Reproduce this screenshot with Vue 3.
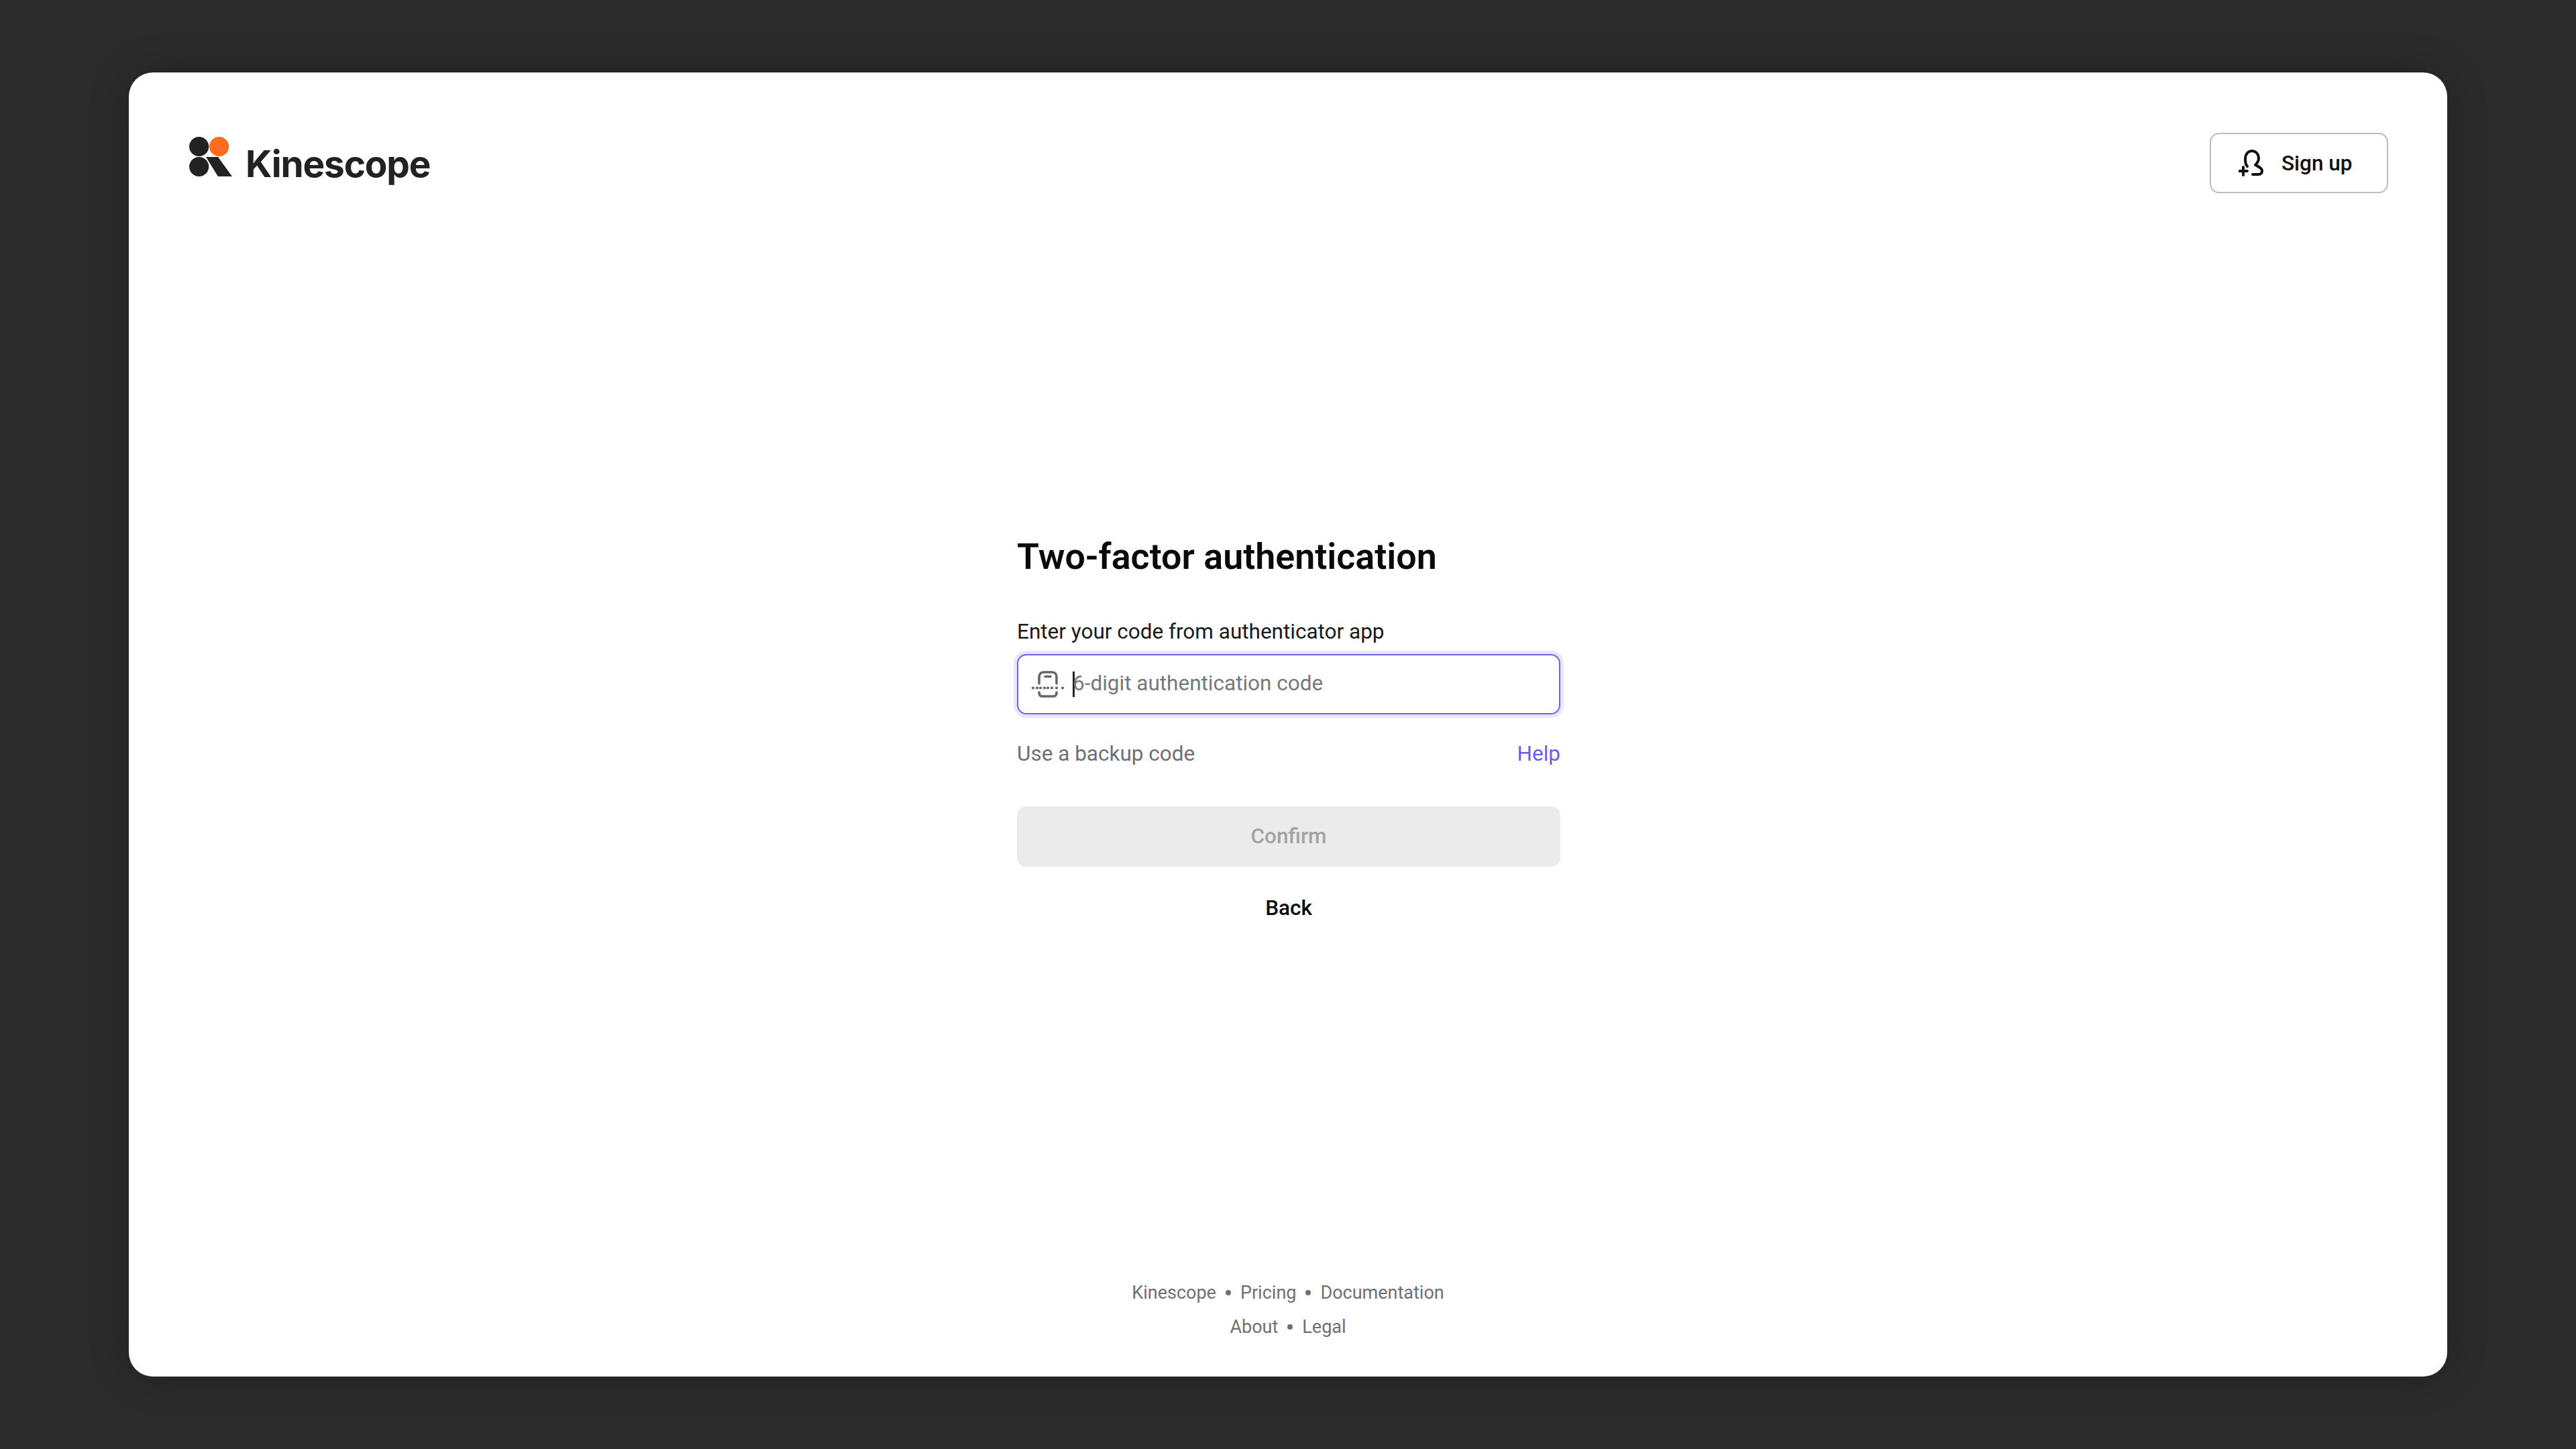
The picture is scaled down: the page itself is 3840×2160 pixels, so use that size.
<template>
  <div class="page">
    <div class="card">
      <header class="top">
        <a class="logo">
          <svg class="logo-mark" viewBox="0 0 64 59">
            <circle cx="14.7" cy="14.5" r="14.6" fill="#222" />
            <circle cx="44.6" cy="14.5" r="14.6" fill="#ff6b1f" />
            <circle cx="14.7" cy="44.5" r="14.6" fill="#222" />
            <polygon points="25,30 43,30 64,59 43,59" fill="#222" />
          </svg>
          <span class="logo-text">Kinescope</span>
        </a>
        <button class="signup">
          <svg class="signup-icon" viewBox="0 0 37 40" fill="none" stroke="#111" stroke-width="4" stroke-linecap="round" stroke-linejoin="round">
            <path d="M13 25C11 23 10 19 10 14C10 6 15 2 20 2C26 2 30 7 30 13C30 18 27 21 25 23C29 25 35 27 35 32C35 36 32 37 29 37H21" />
            <path d="M1.5 32H13M7 26V38" />
          </svg>
          Sign up
        </button>
      </header>

      <main class="main">
        <form class="form" @submit.prevent>
          <h1 class="title">Two-factor authentication</h1>
          <label class="label">Enter your code from authenticator app</label>
          <div class="field">
            <svg class="field-icon" viewBox="0 0 50 40" fill="none" stroke="#666" stroke-width="3.6" stroke-linecap="round">
              <path d="M12 19V9C12 4.500 15 2 19 2H31C35 2 38 4.500 38 9V19" />
              <path d="M12 32V33C12 36 14 38 17 38H33C36 38 38 36 38 33V32" />
              <path d="M21 8.500H29" />
              <g fill="#666" stroke="none">
                <circle v-for="x in dots" :key="x" :cx="x" cy="25.500" r="2.100" />
              </g>
            </svg>
            <span class="caret"></span>
            <span class="placeholder">6-digit authentication code</span>
          </div>
          <div class="links">
            <a class="link-muted">Use a backup code</a>
            <a class="link-help">Help</a>
          </div>
          <button class="confirm" disabled>Confirm</button>
          <a class="back">Back</a>
        </form>
      </main>

      <footer class="footer">
        <div v-for="(row, i) in footerLinks" :key="i" class="footer-row">
          <template v-for="(item, j) in row" :key="item">
            <span v-if="j > 0" class="dot"></span>
            <a>{{ item }}</a>
          </template>
        </div>
      </footer>
    </div>
  </div>
</template>

<script setup>
const dots = [3, 9, 14, 20, 25, 31, 38, 47]

const footerLinks = [
  ['Kinescope', 'Pricing', 'Documentation'],
  ['About', 'Legal'],
]
</script>

<style>
html,
body {
  margin: 0;
  background: #2b2b2b;
}
</style>

<style scoped>
.page {
  width: 3840px;
  height: 2160px;
  display: flex;
  align-items: center;
  justify-content: center;
  background: #2b2b2b;
  font-family: Roboto, "Liberation Sans", sans-serif;
}

.card {
  width: 3456px;
  height: 1944px;
  box-sizing: border-box;
  display: flex;
  flex-direction: column;
  background: #fff;
  border-radius: 36px;
  box-shadow: 0 0 60px rgba(0, 0, 0, 0.22);
}

.top {
  display: flex;
  align-items: center;
  justify-content: space-between;
  padding: 90px 88px 0 90px;
}

.logo {
  display: flex;
  align-items: flex-start;
  gap: 20px;
}

.logo-mark {
  width: 64px;
  height: 59px;
  margin-top: -3px;
}

.logo-text {
  font-family: Inter, sans-serif;
  font-weight: 700;
  font-size: 55px;
  line-height: 70px;
  letter-spacing: -1.200px;
  margin-top: 2px;
  color: #222;
}

.signup {
  width: 266px;
  height: 90px;
  box-sizing: border-box;
  display: flex;
  align-items: center;
  gap: 27px;
  padding: 0 0 0 41px;
  background: #fff;
  border: 2px solid #bdbdbd;
  border-radius: 14px;
  font-family: inherit;
  font-size: 31.500px;
  font-weight: 500;
  color: #111;
}

.signup-icon {
  width: 37px;
  height: 40px;
}

.main {
  flex: 1;
  display: flex;
  align-items: center;
  justify-content: center;
}

.form {
  width: 810px;
  display: flex;
  flex-direction: column;
  margin: 0 0 12px 2px;
}

.title {
  margin: 0;
  font-size: 53.800px;
  line-height: 72px;
  font-weight: 600;
  color: #0a0a0a;
}

.label {
  margin-top: 54px;
  font-size: 31.500px;
  line-height: 44px;
  color: #1a1a1a;
}

.field {
  margin-top: 11px;
  height: 90px;
  box-sizing: border-box;
  display: flex;
  align-items: center;
  padding-left: 19px;
  border: 2px solid #6c63e6;
  border-radius: 14px;
  box-shadow: 0 0 0 5px rgba(108, 99, 230, 0.16);
}

.field-icon {
  width: 50px;
  height: 40px;
  flex: none;
}

.caret {
  width: 3px;
  height: 38px;
  margin: 0 -3px 0 12px;
  background: #222;
  flex: none;
}

.placeholder {
  font-size: 31.500px;
  line-height: 36px;
  margin-bottom: 2px;
  color: #77777c;
}

.links {
  margin-top: 37px;
  display: flex;
  justify-content: space-between;
  font-size: 31.500px;
  line-height: 44px;
}

.link-muted {
  color: #6f6f74;
}

.link-help {
  color: #6a5fe8;
}

.confirm {
  margin-top: 56px;
  height: 90px;
  padding: 0 0 2px;
  border: none;
  border-radius: 14px;
  background: #ebebeb;
  font-family: inherit;
  font-size: 31.500px;
  font-weight: 500;
  color: #a3a3a3;
}

.back {
  margin-top: 32px;
  text-align: center;
  font-size: 31.500px;
  font-weight: 500;
  line-height: 60px;
  color: #0a0a0a;
}

.footer {
  display: flex;
  flex-direction: column;
  gap: 1px;
  padding-bottom: 49px;
  font-size: 27px;
  line-height: 50px;
  color: #6f6f78;
}

.footer-row {
  display: flex;
  justify-content: center;
  align-items: center;
  gap: 14px;
}

.dot {
  width: 8px;
  height: 8px;
  border-radius: 50%;
  background: #6f6f78;
}
</style>
